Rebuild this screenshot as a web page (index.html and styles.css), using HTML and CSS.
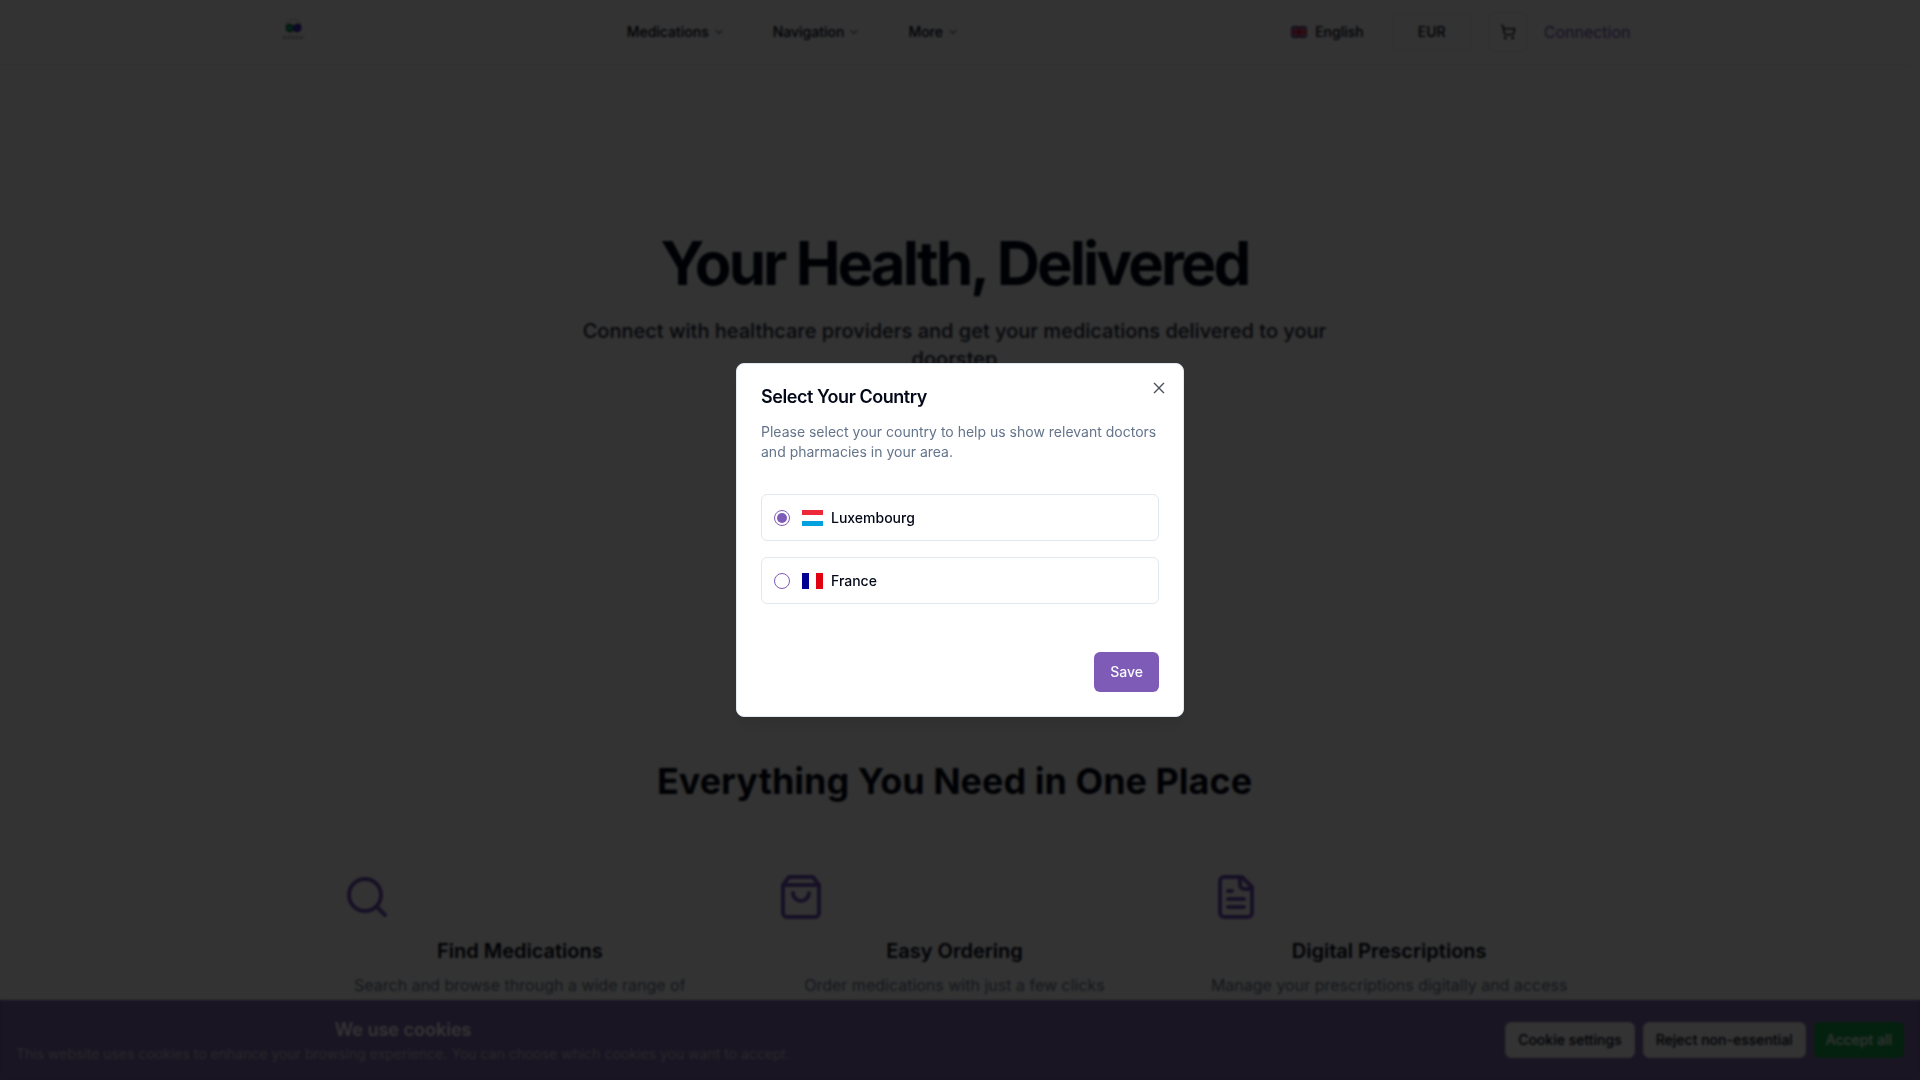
FILE: index.html
```html
<!DOCTYPE html>
<html lang="en">
<head>
    <meta charset="UTF-8">
    <meta name="viewport" content="width=device-width, initial-scale=1.0">
    <title>Your Health, Delivered</title>
    <link rel="stylesheet" href="styles.css">
</head>
<body>
    <div class="page">
        <header class="site-header">
            <div class="header-inner">
                <a href="#" class="logo" aria-label="Home">
                    <svg width="32" height="32" viewBox="0 0 32 32" fill="none">
                        <path d="M7 8a8 7 0 0 1 15 0" stroke="#b9bcc4" stroke-width="1"/>
                        <path d="M14.500 11.500c-2-4-7-4-7 0s5 6 7 1z" fill="#13a04c" stroke="#0b7a3b" stroke-width="2"/>
                        <path d="M14.500 11.500c2-4 7-4 7 0s-5 6-7 1z" fill="#4a1fc0" stroke="#4a22a8" stroke-width="2"/>
                        <circle cx="11" cy="12" r="2" fill="#1fb8a0"/>
                        <circle cx="18" cy="12" r="2" fill="#2746d8"/>
                        <path d="M4 20.500h21M4 22.500h21" stroke="#84878e" stroke-width="1" stroke-dasharray="3 1"/>
                    </svg>
                </a>
                <nav class="main-nav">
                    <button type="button" class="nav-button">Medications
                        <svg class="chevron" viewBox="0 0 24 24"><path d="m6 9 6 6 6-6"/></svg>
                    </button>
                    <button type="button" class="nav-button">Navigation
                        <svg class="chevron" viewBox="0 0 24 24"><path d="m6 9 6 6 6-6"/></svg>
                    </button>
                    <button type="button" class="nav-button">More
                        <svg class="chevron" viewBox="0 0 24 24"><path d="m6 9 6 6 6-6"/></svg>
                    </button>
                </nav>
                <div class="header-actions">
                    <button type="button" class="language-button">
                        <svg width="16" height="12" viewBox="0 0 16 12">
                            <rect width="16" height="12" rx="2" fill="#20307c"/>
                            <path d="M1 1l14 10M15 1L1 11" stroke="#eee" stroke-width="2"/>
                            <path d="M1 1l14 10M15 1L1 11" stroke="#d0103a" stroke-width="1"/>
                            <path d="M8 0v12M0 6h16" stroke="#eee" stroke-width="4"/>
                            <path d="M8 0v12M0 6h16" stroke="#d0103a" stroke-width="3"/>
                        </svg>
                        English
                    </button>
                    <button type="button" class="currency-button">EUR</button>
                    <button type="button" class="cart-button" aria-label="Cart">
                        <svg class="icon" width="16" height="16" viewBox="0 0 24 24">
                            <circle cx="8" cy="21" r="1"/>
                            <circle cx="19" cy="21" r="1"/>
                            <path d="M2.050 2.050h2l2.660 12.420a2 2 0 0 0 2 1.580h9.780a2 2 0 0 0 1.950-1.570l1.650-7.430H5.120"/>
                        </svg>
                    </button>
                    <a href="#" class="login-link">Connection</a>
                </div>
            </div>
        </header>

        <main>
            <section class="hero">
                <h1>Your Health, Delivered</h1>
                <p>Connect with healthcare providers and get your medications delivered to your doorstep</p>
            </section>

            <section class="features">
                <h2>Everything You Need in One Place</h2>
                <div class="feature-grid">
                    <article class="feature">
                        <svg class="icon feature-icon" viewBox="0 0 24 24">
                            <circle cx="11" cy="11" r="8"/>
                            <path d="m21 21-4.300-4.300"/>
                        </svg>
                        <h3>Find Medications</h3>
                        <p>Search and browse through a wide range of</p>
                    </article>
                    <article class="feature">
                        <svg class="icon feature-icon" viewBox="0 0 24 24">
                            <path d="M6 2 3 6v14a2 2 0 0 0 2 2h14a2 2 0 0 0 2-2V6l-3-4Z"/>
                            <path d="M3 6h18"/>
                            <path d="M16 10a4 4 0 0 1-8 0"/>
                        </svg>
                        <h3>Easy Ordering</h3>
                        <p>Order medications with just a few clicks</p>
                    </article>
                    <article class="feature">
                        <svg class="icon feature-icon" viewBox="0 0 24 24">
                            <path d="M15 2H6a2 2 0 0 0-2 2v16a2 2 0 0 0 2 2h12a2 2 0 0 0 2-2V7Z"/>
                            <path d="M14 2v4a2 2 0 0 0 2 2h4"/>
                            <path d="M10 9H8"/>
                            <path d="M16 13H8"/>
                            <path d="M16 17H8"/>
                        </svg>
                        <h3>Digital Prescriptions</h3>
                        <p>Manage your prescriptions digitally and access</p>
                    </article>
                </div>
            </section>
        </main>
    </div>

    <aside class="cookie-bar">
        <div class="cookie-text">
            <h3>We use cookies</h3>
            <p>This website uses cookies to enhance your browsing experience. You can choose which cookies you want to accept.</p>
        </div>
        <div class="cookie-actions">
            <button type="button">Cookie settings</button>
            <button type="button">Reject non-essential</button>
            <button type="button" class="accept">Accept all</button>
        </div>
    </aside>

    <div class="overlay">
        <form class="dialog" role="dialog" aria-labelledby="dialog-title">
            <button type="button" class="close-button" aria-label="Close">
                <svg class="icon" width="16" height="16" viewBox="0 0 24 24"><path d="M19 5 5 19M5 5l14 14"/></svg>
            </button>
            <h2 id="dialog-title">Select Your Country</h2>
            <p>Please select your country to help us show relevant doctors and pharmacies in your area.</p>
            <div class="options">
                <label class="option" for="country-lu">
                    <input type="radio" name="country" id="country-lu" value="LU" checked>
                    <svg class="flag" viewBox="0 0 21 16">
                        <rect width="21" height="16" fill="#fff"/>
                        <rect width="21" height="5" fill="#ed2939"/>
                        <rect y="11" width="21" height="5" fill="#00a1de"/>
                    </svg>
                    <span>Luxembourg</span>
                </label>
                <label class="option" for="country-fr">
                    <input type="radio" name="country" id="country-fr" value="FR">
                    <svg class="flag" viewBox="0 0 21 16">
                        <rect width="7" height="16" fill="#000091"/>
                        <rect x="7" width="7" height="16" fill="#fff"/>
                        <rect x="14" width="7" height="16" fill="#e1000f"/>
                    </svg>
                    <span>France</span>
                </label>
            </div>
            <div class="dialog-footer">
                <button type="submit" class="save-button">Save</button>
            </div>
        </form>
    </div>
</body>
</html>
```
FILE: styles.css
```css
* {
    box-sizing: border-box;
}

body {
    margin: 0;
    font-family: Inter, "Liberation Sans", sans-serif;
    font-size: 16px;
    line-height: 24px;
    color: #020817;
    background-color: #fff;
    overflow: hidden;
}

h1, h2, h3, p {
    margin: 0;
}

button {
    font: inherit;
    font-size: 14px;
    line-height: 20px;
    font-weight: 500;
    color: inherit;
    background: none;
    border: 0;
    padding: 0;
    cursor: pointer;
}

svg {
    display: block;
    flex-shrink: 0;
}

.icon, .chevron {
    fill: none;
    stroke: currentColor;
    stroke-width: 2;
    stroke-linecap: round;
    stroke-linejoin: round;
}

/* Space left by the hidden scrollbar */
.page {
    height: 100vh;
    padding-right: 11px;
    overflow: hidden;
}

/* Header */
.site-header {
    border-bottom: 1px solid #dbe1ea;
}

.header-inner {
    display: flex;
    align-items: center;
    justify-content: space-between;
    max-width: 1400px;
    height: 64px;
    margin: 0 auto;
    padding: 0 24px;
}

.main-nav, .header-actions {
    display: flex;
    align-items: center;
    gap: 16px;
}

.nav-button {
    display: flex;
    align-items: center;
    gap: 4px;
    padding: 8px 16px;
}

.chevron {
    width: 12px;
    height: 12px;
}

.language-button {
    display: flex;
    align-items: center;
    gap: 8px;
    padding: 8px 12px 8px 16px;
}

.currency-button {
    width: 80px;
    height: 36px;
    border: 1px solid #dbe1ea;
    border-radius: 6px;
}

.cart-button {
    display: grid;
    place-items: center;
    width: 40px;
    height: 40px;
    border: 1px solid #dbe1ea;
    border-radius: 6px;
}

.login-link {
    color: #7352bb;
    text-decoration: none;
}

/* Hero */
.hero {
    min-height: 600px;
    padding: 168px 16px 0;
    text-align: center;
}

.hero h1 {
    font-size: 60px;
    line-height: 60px;
    font-weight: 700;
    letter-spacing: -0.05em;
}

.hero p {
    max-width: 768px;
    margin: 24px auto 0;
    font-size: 20px;
    line-height: 28px;
    font-weight: 500;
    color: #1e293b;
}

/* Features */
.features {
    max-width: 1400px;
    margin: 0 auto;
    padding: 96px 64px;
    text-align: center;
}

.features h2 {
    font-size: 36px;
    line-height: 40px;
    font-weight: 700;
}

.feature-grid {
    display: grid;
    grid-template-columns: repeat(3, 1fr);
    gap: 32px;
    margin-top: 48px;
}

.feature {
    padding: 24px;
}

.feature-icon {
    width: 48px;
    height: 48px;
    margin-bottom: 16px;
    color: #7352bb;
}

.feature h3 {
    margin-bottom: 8px;
    font-size: 20px;
    line-height: 28px;
    font-weight: 600;
}

.feature p {
    margin: 0 -8px;
    color: #64748b;
}

/* Cookie bar */
.cookie-bar {
    position: fixed;
    left: 0;
    right: 0;
    bottom: 0;
    display: flex;
    align-items: center;
    justify-content: space-between;
    min-height: 80px;
    padding: 16px;
    background-color: #8068ac;
    color: #fff;
}

.cookie-text {
    text-align: center;
}

.cookie-text h3 {
    font-size: 18px;
    line-height: 28px;
    font-weight: 600;
}

.cookie-text p {
    font-size: 14px;
    line-height: 20px;
    color: #cac4d4;
}

.cookie-actions {
    display: flex;
    gap: 8px;
}

.cookie-actions button {
    height: 36px;
    padding: 0 12px;
    border: 1px solid #e2e8f0;
    border-radius: 6px;
    background-color: #fff;
    color: #020817;
}

.cookie-actions .accept {
    border: 0;
    background-color: #16a34a;
    color: #fff;
}

/* Country dialog */
.overlay {
    position: fixed;
    inset: 0;
    display: grid;
    place-items: center;
    background-color: rgba(0, 0, 0, 0.8);
    backdrop-filter: blur(1px);
}

.dialog {
    position: relative;
    width: 448px;
    max-width: 100%;
    padding: 24px;
    border: 1px solid #e2e8f0;
    border-radius: 8px;
    background-color: #fff;
    box-shadow: 0 10px 15px -3px rgba(0, 0, 0, 0.1);
}

.dialog h2 {
    font-size: 18px;
    line-height: 18px;
    font-weight: 600;
    letter-spacing: -0.025em;
}

.dialog p {
    margin-top: 16px;
    font-size: 14px;
    line-height: 20px;
    color: #64748b;
}

.close-button {
    position: absolute;
    top: 16px;
    right: 16px;
    opacity: 0.7;
}

.options {
    display: grid;
    gap: 16px;
    padding: 32px 0;
}

.option {
    display: flex;
    align-items: center;
    padding: 12px;
    border: 1px solid #e2e8f0;
    border-radius: 6px;
    font-size: 14px;
    line-height: 21px;
    font-weight: 500;
}

.option input {
    appearance: none;
    display: grid;
    place-items: center;
    width: 16px;
    height: 16px;
    margin: 0 12px 0 0;
    border: 1px solid #7f5bb8;
    border-radius: 50%;
}

.option input:checked::before {
    content: "";
    width: 10px;
    height: 10px;
    border-radius: 50%;
    background-color: #7f5bb8;
}

.flag {
    width: 21px;
    height: 16px;
    margin-right: 8px;
}

.dialog-footer {
    display: flex;
    justify-content: flex-end;
    padding-top: 16px;
}

.save-button {
    height: 40px;
    padding: 0 16px;
    border-radius: 6px;
    background-color: #7f5bb8;
    color: #f8fafc;
}
```
